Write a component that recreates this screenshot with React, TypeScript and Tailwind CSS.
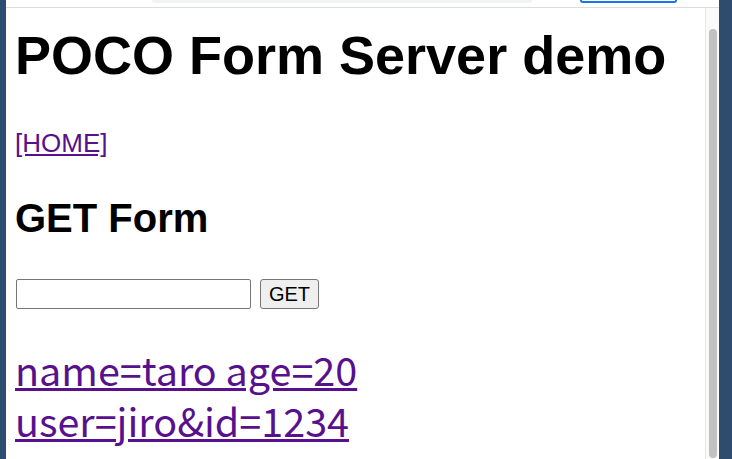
export default function App() {
  return (
    <div className="w-[732px] h-[459px] overflow-hidden bg-[#2e4c6d] flex">
      {/* browser window */}
      <div className="ml-[6px] w-[713px] h-full bg-white flex flex-col">
        {/* toolbar edge */}
        <div className="h-[8px] border-b border-[#dcdcdc] flex items-start shrink-0">
          <div className="ml-[146px] w-[380px] h-[3px] bg-[#f1f3f4] rounded-b-lg" />
          <div className="ml-[48px] w-[97px] h-[3px] border-b-2 border-x-2 border-[#1a73e8] rounded-b-lg" />
        </div>

        <div className="flex flex-1 min-h-0">
          {/* page */}
          <div className="flex-1 pl-[9px] font-['Liberation_Sans',Arial,sans-serif] text-black">
            <h1 className="mt-[20px] text-[54px] leading-none font-bold">POCO Form Server demo</h1>
            <div className="mt-[48px] text-[26px] leading-none">
              <a href="#" className="text-[#58118c] underline">[HOME]</a>
            </div>
            <h2 className="mt-[42px] text-[40px] leading-none font-bold">GET Form</h2>
            <form className="mt-[41px] flex items-center gap-[9px] pl-[1px]" onSubmit={(e) => e.preventDefault()}>
              <input
                type="text"
                className="w-[235px] h-[30px] border border-[#767676] rounded-[2px] bg-white px-1 text-[20px]"
              />
              <button
                type="submit"
                className="w-[59px] h-[30px] border border-[#767676] rounded-[3px] bg-[#efefef] text-[20px] leading-none"
              >
                GET
              </button>
            </form>
            <div className="mt-[34px] flex flex-col items-start text-[39.5px] leading-[51px] font-['Noto_Sans_CJK_JP',sans-serif]">
              <a href="#" className="inline-block h-[51px] text-[#58118c] underline">name=taro age=20</a>
              <a href="#" className="inline-block h-[51px] text-[#58118c] underline">user=jiro&amp;id=1234</a>
            </div>
          </div>

          {/* scrollbar */}
          <div className="w-[14px] border-l border-[#e8e8e8] bg-[#fafafa] flex justify-center pt-[21px] pb-[1px]">
            <div className="w-[8px] h-full rounded-full bg-[#c1c1c1]" />
          </div>
        </div>
      </div>
    </div>
  );
}
